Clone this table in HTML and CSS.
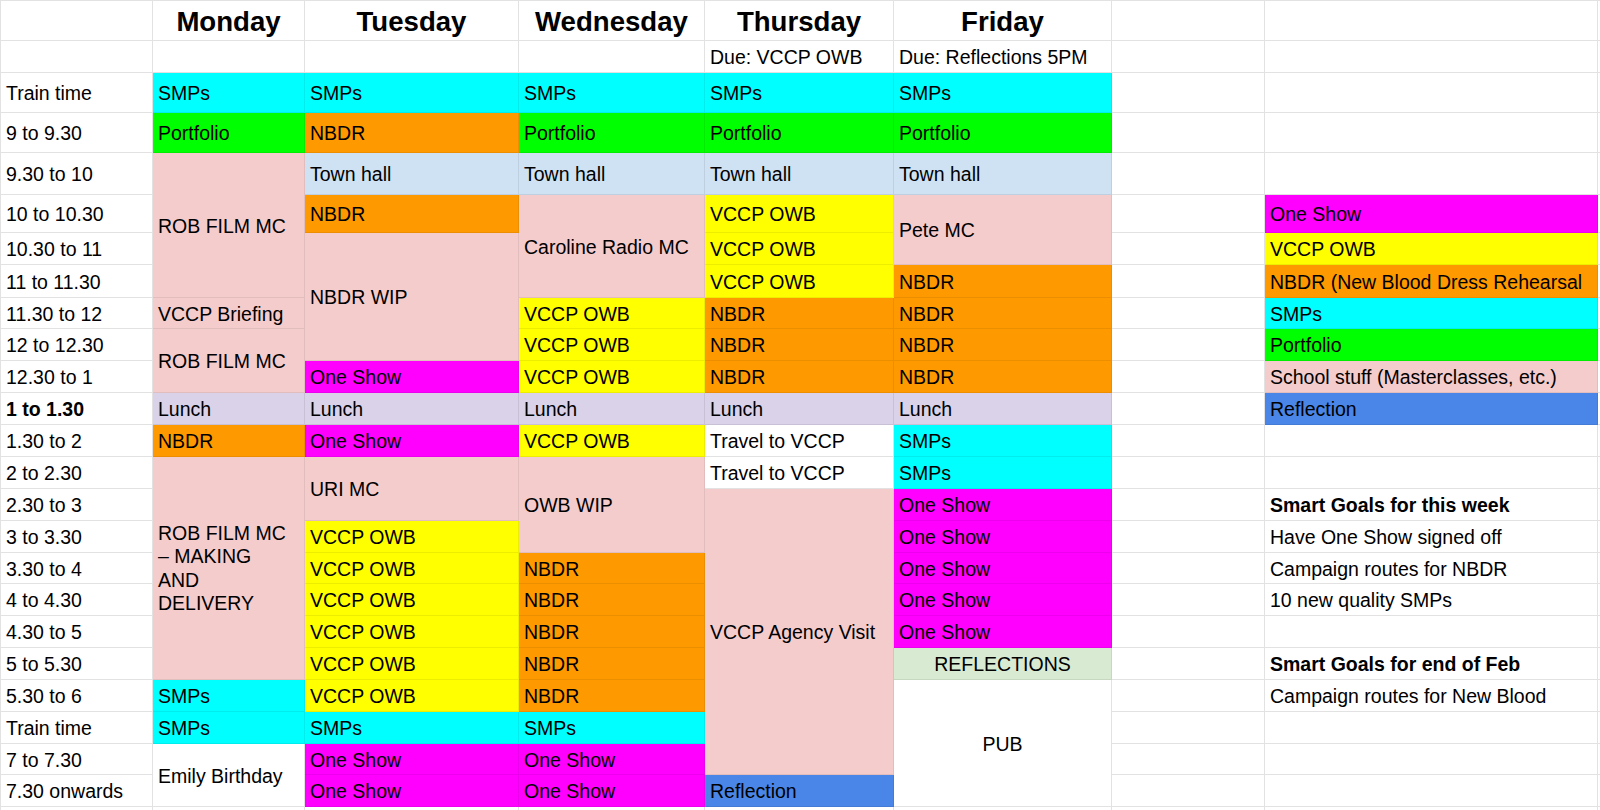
FILE: index.html
```html
<!DOCTYPE html>
<html lang="en">
<head>
<meta charset="utf-8">
<title>Weekly schedule</title>
<link rel="stylesheet" href="styles.css">
</head>
<body>
<div class="sheet">
  <!-- r0 -->
  <div class="c"></div>
  <div class="c hd">Monday</div>
  <div class="c hd">Tuesday</div>
  <div class="c hd">Wednesday</div>
  <div class="c hd">Thursday</div>
  <div class="c hd">Friday</div>
  <div class="c"></div><div class="c"></div><div class="c"></div>
  <!-- r1 -->
  <div class="c"></div><div class="c"></div><div class="c"></div><div class="c"></div>
  <div class="c">Due: VCCP OWB</div>
  <div class="c">Due: Reflections 5PM</div>
  <div class="c"></div><div class="c"></div><div class="c"></div>
  <!-- r2 -->
  <div class="c">Train time</div>
  <div class="c cy">SMPs</div>
  <div class="c cy">SMPs</div>
  <div class="c cy">SMPs</div>
  <div class="c cy">SMPs</div>
  <div class="c cy">SMPs</div>
  <div class="c"></div><div class="c"></div><div class="c"></div>
  <!-- r3 -->
  <div class="c">9 to 9.30</div>
  <div class="c gr">Portfolio</div>
  <div class="c or">NBDR</div>
  <div class="c gr">Portfolio</div>
  <div class="c gr">Portfolio</div>
  <div class="c gr">Portfolio</div>
  <div class="c"></div><div class="c"></div><div class="c"></div>
  <!-- r4 -->
  <div class="c">9.30 to 10</div>
  <div class="c pk s4">ROB FILM MC</div>
  <div class="c lb">Town hall</div>
  <div class="c lb">Town hall</div>
  <div class="c lb">Town hall</div>
  <div class="c lb">Town hall</div>
  <div class="c"></div><div class="c"></div><div class="c"></div>
  <!-- r5 -->
  <div class="c">10 to 10.30</div>
  <div class="c or">NBDR</div>
  <div class="c pk s3">Caroline Radio MC</div>
  <div class="c ye">VCCP OWB</div>
  <div class="c pk s2">Pete MC</div>
  <div class="c"></div>
  <div class="c mg">One Show</div>
  <div class="c"></div>
  <!-- r6 -->
  <div class="c">10.30 to 11</div>
  <div class="c pk s4">NBDR WIP</div>
  <div class="c ye">VCCP OWB</div>
  <div class="c"></div>
  <div class="c ye">VCCP OWB</div>
  <div class="c"></div>
  <!-- r7 -->
  <div class="c">11 to 11.30</div>
  <div class="c ye">VCCP OWB</div>
  <div class="c or">NBDR</div>
  <div class="c"></div>
  <div class="c or">NBDR (New Blood Dress Rehearsal</div>
  <div class="c"></div>
  <!-- r8 -->
  <div class="c">11.30 to 12</div>
  <div class="c pk">VCCP Briefing</div>
  <div class="c ye">VCCP OWB</div>
  <div class="c or">NBDR</div>
  <div class="c or">NBDR</div>
  <div class="c"></div>
  <div class="c cy">SMPs</div>
  <div class="c"></div>
  <!-- r9 -->
  <div class="c">12 to 12.30</div>
  <div class="c pk s2">ROB FILM MC</div>
  <div class="c ye">VCCP OWB</div>
  <div class="c or">NBDR</div>
  <div class="c or">NBDR</div>
  <div class="c"></div>
  <div class="c gr">Portfolio</div>
  <div class="c"></div>
  <!-- r10 -->
  <div class="c">12.30 to 1</div>
  <div class="c mg">One Show</div>
  <div class="c ye">VCCP OWB</div>
  <div class="c or">NBDR</div>
  <div class="c or">NBDR</div>
  <div class="c"></div>
  <div class="c pk">School stuff (Masterclasses, etc.)</div>
  <div class="c"></div>
  <!-- r11 -->
  <div class="c b">1 to 1.30</div>
  <div class="c lv">Lunch</div>
  <div class="c lv">Lunch</div>
  <div class="c lv">Lunch</div>
  <div class="c lv">Lunch</div>
  <div class="c lv">Lunch</div>
  <div class="c"></div>
  <div class="c bl">Reflection</div>
  <div class="c"></div>
  <!-- r12 -->
  <div class="c">1.30 to 2</div>
  <div class="c or">NBDR</div>
  <div class="c mg">One Show</div>
  <div class="c ye">VCCP OWB</div>
  <div class="c">Travel to VCCP</div>
  <div class="c cy">SMPs</div>
  <div class="c"></div><div class="c"></div><div class="c"></div>
  <!-- r13 -->
  <div class="c">2 to 2.30</div>
  <div class="c pk s7 multi">ROB FILM MC<br>– MAKING<br>AND<br>DELIVERY</div>
  <div class="c pk s2">URI MC</div>
  <div class="c pk s3">OWB WIP</div>
  <div class="c">Travel to VCCP</div>
  <div class="c cy">SMPs</div>
  <div class="c"></div><div class="c"></div><div class="c"></div>
  <!-- r14 -->
  <div class="c">2.30 to 3</div>
  <div class="c pk s9">VCCP Agency Visit</div>
  <div class="c mg">One Show</div>
  <div class="c"></div>
  <div class="c b">Smart Goals for this week</div>
  <div class="c"></div>
  <!-- r15 -->
  <div class="c">3 to 3.30</div>
  <div class="c ye">VCCP OWB</div>
  <div class="c mg">One Show</div>
  <div class="c"></div>
  <div class="c">Have One Show signed off</div>
  <div class="c"></div>
  <!-- r16 -->
  <div class="c">3.30 to 4</div>
  <div class="c ye">VCCP OWB</div>
  <div class="c or">NBDR</div>
  <div class="c mg">One Show</div>
  <div class="c"></div>
  <div class="c">Campaign routes for NBDR</div>
  <div class="c"></div>
  <!-- r17 -->
  <div class="c">4 to 4.30</div>
  <div class="c ye">VCCP OWB</div>
  <div class="c or">NBDR</div>
  <div class="c mg">One Show</div>
  <div class="c"></div>
  <div class="c">10 new quality SMPs</div>
  <div class="c"></div>
  <!-- r18 -->
  <div class="c">4.30 to 5</div>
  <div class="c ye">VCCP OWB</div>
  <div class="c or">NBDR</div>
  <div class="c mg">One Show</div>
  <div class="c"></div><div class="c"></div><div class="c"></div>
  <!-- r19 -->
  <div class="c">5 to 5.30</div>
  <div class="c ye">VCCP OWB</div>
  <div class="c or">NBDR</div>
  <div class="c lg ctr">REFLECTIONS</div>
  <div class="c"></div>
  <div class="c b">Smart Goals for end of Feb</div>
  <div class="c"></div>
  <!-- r20 -->
  <div class="c">5.30 to 6</div>
  <div class="c cy">SMPs</div>
  <div class="c ye">VCCP OWB</div>
  <div class="c or">NBDR</div>
  <div class="c s4 ctr">PUB</div>
  <div class="c"></div>
  <div class="c">Campaign routes for New Blood</div>
  <div class="c"></div>
  <!-- r21 -->
  <div class="c">Train time</div>
  <div class="c cy">SMPs</div>
  <div class="c cy">SMPs</div>
  <div class="c cy">SMPs</div>
  <div class="c"></div><div class="c"></div><div class="c"></div>
  <!-- r22 -->
  <div class="c">7 to 7.30</div>
  <div class="c s2">Emily Birthday</div>
  <div class="c mg">One Show</div>
  <div class="c mg">One Show</div>
  <div class="c"></div><div class="c"></div><div class="c"></div>
  <!-- r23 -->
  <div class="c">7.30 onwards</div>
  <div class="c mg">One Show</div>
  <div class="c mg">One Show</div>
  <div class="c bl">Reflection</div>
  <div class="c"></div><div class="c"></div><div class="c"></div>
  <!-- r24 -->
  <div class="c"></div><div class="c"></div><div class="c"></div>
  <div class="c"></div><div class="c"></div><div class="c"></div>
  <div class="c"></div><div class="c"></div><div class="c"></div>
</div>
</body>
</html>
```

FILE: styles.css
```css
html, body {
  margin: 0;
  padding: 0;
  background: #ffffff;
}

body {
  width: 1600px;
  height: 810px;
  overflow: hidden;
  font-family: "Liberation Sans", Arial, sans-serif;
  color: #000000;
}

.sheet {
  display: grid;
  grid-template-columns: 152px 152px 214px 186px 189px 218px 153px 333px 1fr;
  grid-template-rows: 40px 32px 40px 40px 42px 38px 32px 33px 31px 32px 32px 32px 32px 32px 32px 32px 31px 32px 32px 32px 32px 32px 31px 32px 20px;
  border-top: 1px solid #e2e2e2;
  border-left: 1px solid #e2e2e2;
}

.c {
  box-sizing: border-box;
  display: flex;
  align-items: center;
  padding: 1px 5px 0 5px;
  border-right: 1px solid #e2e2e2;
  border-bottom: 1px solid #e2e2e2;
  font-size: 19.5px;
  line-height: 22px;
  white-space: nowrap;
  overflow: hidden;
  min-width: 0;
}

.hd {
  justify-content: center;
  font-weight: bold;
  font-size: 27.6px;
  line-height: 32px;
  padding-top: 2px;
}

.ctr {
  justify-content: center;
}

.b {
  font-weight: bold;
}

.multi {
  white-space: normal;
  line-height: 23.3px;
}

.s2 { grid-row: span 2; }
.s3 { grid-row: span 3; }
.s4 { grid-row: span 4; }
.s7 { grid-row: span 7; }
.s9 { grid-row: span 9; }

.cy { background: #00ffff; border-color: rgba(0, 0, 0, 0.07); }
.gr { background: #00ff00; border-color: rgba(0, 0, 0, 0.07); }
.or { background: #ff9900; border-color: rgba(0, 0, 0, 0.07); }
.lb { background: #cfe2f3; border-color: rgba(0, 0, 0, 0.08); }
.pk { background: #f4cccc; border-color: rgba(0, 0, 0, 0.07); }
.mg { background: #ff00ff; border-color: rgba(0, 0, 0, 0.07); }
.ye { background: #ffff00; border-color: rgba(0, 0, 0, 0.07); }
.lv { background: #d9d2e9; border-color: rgba(0, 0, 0, 0.08); }
.bl { background: #4a86e8; border-color: rgba(0, 0, 0, 0.08); }
.lg { background: #d9ead3; border-color: rgba(0, 0, 0, 0.08); }
```
